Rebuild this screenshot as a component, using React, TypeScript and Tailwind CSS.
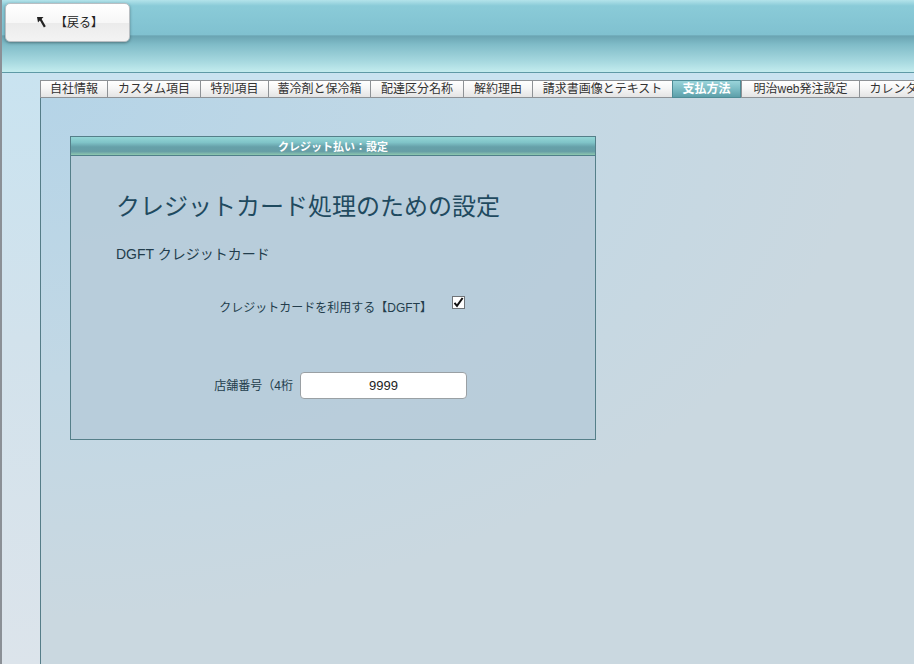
import React from 'react';

const tabs = [
  { label: '自社情報', w: 67 },
  { label: 'カスタム項目', w: 93 },
  { label: '特別項目', w: 68 },
  { label: '蓄冷剤と保冷箱', w: 102 },
  { label: '配達区分名称', w: 93 },
  { label: '解約理由', w: 69 },
  { label: '請求書画像とテキスト', w: 140 },
  { label: '支払方法', w: 69, active: true },
  { label: '明治web発注設定', w: 118 },
  { label: 'カレンダー', w: 80 },
];

function BackArrow() {
  return (
    <svg width="9" height="11" viewBox="0 0 9 11" className="shrink-0">
      <path d="M0 0 L6.5 0 L4.6 1.9 L8.8 9.2 L6.9 10.4 L2.9 3.5 L1 5.4 Z" fill="#222" />
    </svg>
  );
}

export default function App() {
  return (
    <div className="flex h-[664px] w-[914px] flex-col overflow-hidden border-l-2 border-[#8b9096] font-['Liberation_Sans','Noto_Sans_CJK_JP',sans-serif] text-[#233d4c]">
      {/* ヘッダー */}
      <header className="h-[73px] shrink-0 border-b border-[#5e9aa6] bg-[linear-gradient(to_bottom,#b3e3ea_0%,#8acbd8_8%,#80c1d0_48%,#6aa4b2_50%,#80bcc8_62%,#a6d8df_85%,#c3ecee_100%)]">
        <button className="ml-[3px] mt-[3px] flex h-[39px] w-[125px] items-center justify-start gap-[9px] rounded-[5px] border border-[#b9bec2] bg-[linear-gradient(to_bottom,#ffffff_0%,#f7f7f7_50%,#ebebeb_52%,#f3f3f3_100%)] pl-[31px] text-[12px] text-[#222] shadow-[0_1px_3px_rgba(0,0,0,0.35)]">
          <BackArrow />
          <span>【戻る】</span>
        </button>
      </header>

      <div className="relative flex flex-1">
        {/* 背景の弧 */}
        <svg className="pointer-events-none absolute inset-0 h-full w-full" viewBox="0 0 912 590" preserveAspectRatio="none">
          <path d="M0 330 C 40 180, 140 60, 250 25" stroke="#ffffff" strokeOpacity="0.35" strokeWidth="14" fill="none" />
          <path d="M30 300 C 120 160, 260 90, 400 88" stroke="#ffffff" strokeOpacity="0.18" strokeWidth="10" fill="none" />
        </svg>

        {/* 左帯 */}
        <div className="relative w-[38px] shrink-0 bg-[linear-gradient(to_bottom,#c9e3f0_0%,#d2e2ec_45%,#dce4eb_100%)]" />

        <main className="relative flex flex-1 flex-col bg-[linear-gradient(to_bottom,#c9e3f0_0px,#c9e3f0_25px,transparent_25px)]">
          {/* タブ */}
          <nav className="mt-[7px] flex h-[18px] shrink-0">
            {tabs.map((t) => (
              <div
                key={t.label}
                style={{ width: t.w }}
                className={
                  t.active
                    ? 'flex shrink-0 items-center justify-center overflow-hidden whitespace-nowrap border border-[#4e8c96] bg-[linear-gradient(to_bottom,#9ad4da_0%,#7bbcc4_50%,#5d9fa9_100%)] text-[12px] font-bold text-white'
                    : 'flex shrink-0 items-center justify-center overflow-hidden whitespace-nowrap border border-r-0 border-[#8e9296] bg-[linear-gradient(to_bottom,#ffffff_0%,#f6f6f6_45%,#e4e4e4_100%)] text-[12px] text-[#333]'
                }
              >
                {t.label}
              </div>
            ))}
          </nav>

          {/* コンテンツ */}
          <section className="flex-1 border-l border-[#557d88] bg-[radial-gradient(ellipse_at_0%_0%,#b5d4e7_0%,#c2d8e5_35%,#cad8e0_65%)] pl-[29px] pt-[38px]">
            <div className="relative flex h-[304px] w-[526px] flex-col border border-[#557f89]">
              <div className="flex h-[19px] shrink-0 items-center justify-center border-b border-[#50808a] bg-[linear-gradient(to_bottom,#94d6d6_0%,#80c4c8_30%,#66a0a9_55%,#679ea6_80%,#8ec8b0_100%)] pt-[2px] text-[11px] font-bold text-white">
                クレジット払い：設定
              </div>
              <div className="flex flex-1 flex-col bg-[#b7ccd9]/90 pr-[128px]">
                <h1 className="ml-[45px] mt-[35px] whitespace-nowrap text-[24px] leading-[32px] text-[#1f4a5f]">
                  クレジットカード処理のための設定
                </h1>
                <p className="ml-[45px] mt-[22px] whitespace-nowrap text-[14px] leading-[18px] text-[#233d4c]">DGFT クレジットカード</p>

                <div className="mt-[33px] flex items-start justify-end gap-[20px]">
                  <span className="mt-[4px] whitespace-nowrap text-[12px] leading-[16px]">クレジットカードを利用する【DGFT】</span>
                  <span className="mr-[2px] flex h-[13px] w-[13px] items-center justify-center border border-[#6f7478] bg-white">
                    <svg width="11" height="11" viewBox="0 0 11 11">
                      <path d="M1.5 5.8 L4 8.8 L9.6 1" stroke="#111" strokeWidth="2" fill="none" />
                    </svg>
                  </span>
                </div>

                <div className="mt-[56px] flex items-center justify-end gap-[7px]">
                  <span className="whitespace-nowrap text-[12px] leading-[16px]">店舗番号（4桁</span>
                  <input
                    readOnly
                    value="9999"
                    className="h-[27px] w-[167px] rounded-[4px] border border-[#9aa0a4] bg-white text-center text-[13px] text-[#222] outline-none"
                  />
                </div>
              </div>
            </div>
          </section>
        </main>
      </div>
    </div>
  );
}
